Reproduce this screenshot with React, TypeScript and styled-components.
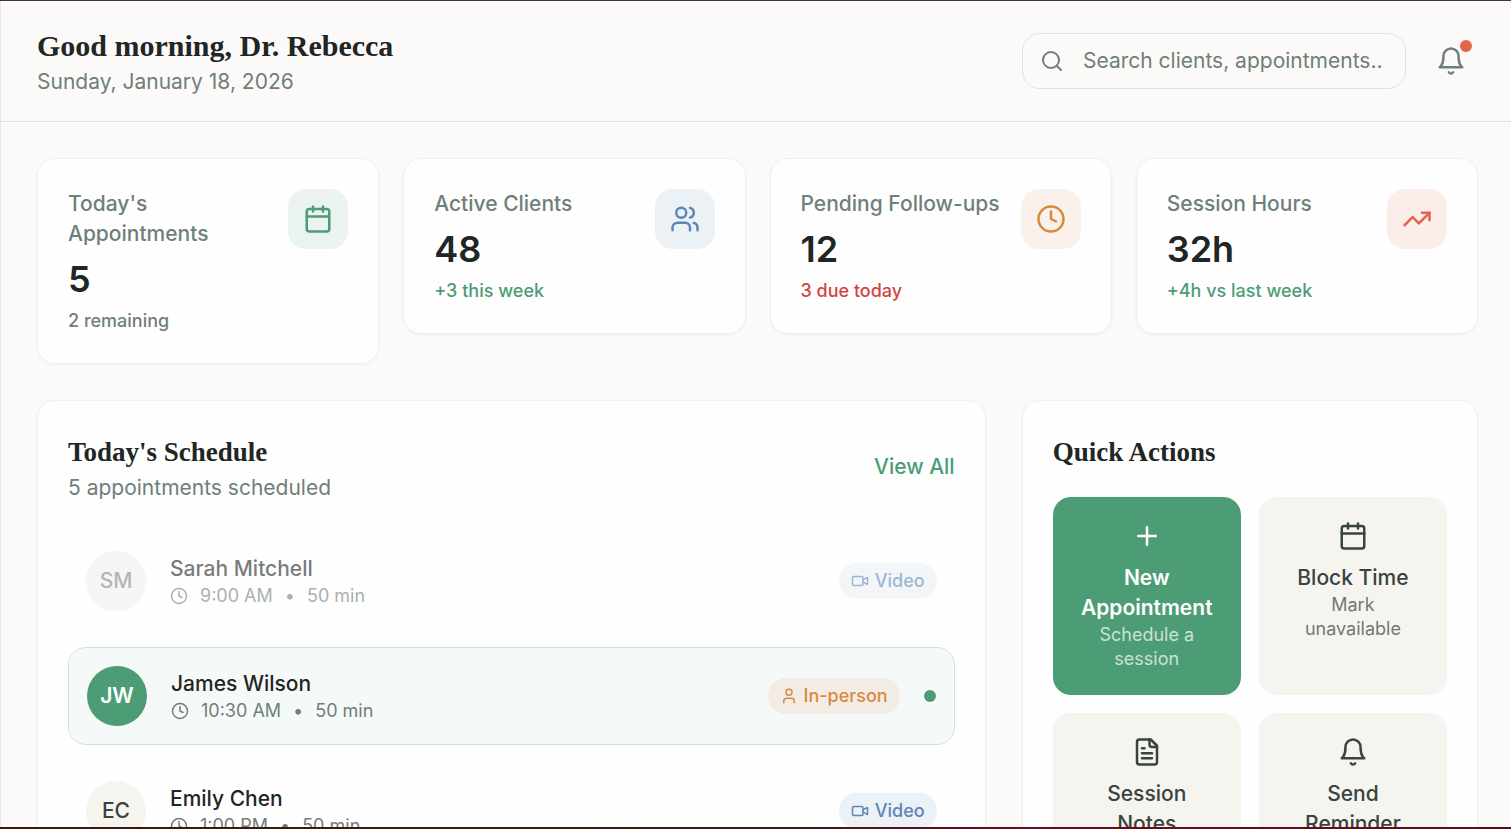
import React from "react";
import styled, { createGlobalStyle, css } from "styled-components";

const color = {
  page: "#fcfaf8",
  card: "#fefefe",
  ink: "#1f2624",
  inkSoft: "#39433f",
  muted: "#6e8079",
  border: "#e0e3df",
  cardBorder: "#f1f1ef",
  green: "#4c9c75",
  blue: "#5c86b5",
  orange: "#d88a40",
  coral: "#e2654a",
  red: "#cf4545",
  sand: "#f5f4ef",
};

const GlobalStyle = createGlobalStyle`
  *, *::before, *::after { box-sizing: border-box; }
  body {
    margin: 0;
    background: ${color.page};
    color: ${color.ink};
    font-family: Inter, "Liberation Sans", sans-serif;
    font-size: 21px;
    line-height: 30px;
  }
  h1, h2, h3, p, ul { margin: 0; padding: 0; }
  ul { list-style: none; }
  button, input { font: inherit; color: inherit; }
`;

/* Icons */

const Svg = styled.svg<{ $size: number }>`
  display: block;
  flex: none;
  width: ${(p) => p.$size}px;
  height: ${(p) => p.$size}px;
  fill: none;
  stroke: currentColor;
  stroke-width: 2;
  stroke-linecap: round;
  stroke-linejoin: round;
`;

const shapes = {
  search: (
    <>
      <circle cx="11" cy="11" r="8" />
      <path d="m21 21-4.3-4.3" />
    </>
  ),
  bell: (
    <>
      <path d="M6 8a6 6 0 0 1 12 0c0 7 3 9 3 9H3s3-2 3-9" />
      <path d="M10.3 21a1.94 1.94 0 0 0 3.4 0" />
    </>
  ),
  calendar: (
    <>
      <path d="M8 2v4M16 2v4M3 10h18" />
      <rect width="18" height="18" x="3" y="4" rx="2" />
    </>
  ),
  users: (
    <>
      <path d="M16 21v-2a4 4 0 0 0-4-4H6a4 4 0 0 0-4 4v2" />
      <circle cx="9" cy="7" r="4" />
      <path d="M22 21v-2a4 4 0 0 0-3-3.87M16 3.13a4 4 0 0 1 0 7.75" />
    </>
  ),
  clock: (
    <>
      <circle cx="12" cy="12" r="10" />
      <path d="M12 6v6l4 2" />
    </>
  ),
  trend: (
    <>
      <path d="m22 7-8.5 8.5-5-5L2 17" />
      <path d="M16 7h6v6" />
    </>
  ),
  video: (
    <>
      <path d="m16 13 5.223 3.482a.5.5 0 0 0 .777-.416V7.87a.5.5 0 0 0-.752-.432L16 10.5" />
      <rect x="2" y="6" width="14" height="12" rx="2" />
    </>
  ),
  user: (
    <>
      <path d="M19 21v-2a4 4 0 0 0-4-4H9a4 4 0 0 0-4 4v2" />
      <circle cx="12" cy="7" r="4" />
    </>
  ),
  plus: <path d="M5 12h14M12 5v14" />,
  file: (
    <>
      <path d="M15 2H6a2 2 0 0 0-2 2v16a2 2 0 0 0 2 2h12a2 2 0 0 0 2-2V7Z" />
      <path d="M14 2v4a2 2 0 0 0 2 2h4M10 9H8M16 13H8M16 17H8" />
    </>
  ),
};

type IconName = keyof typeof shapes;

const Icon = ({ name, size = 30 }: { name: IconName; size?: number }) => (
  <Svg $size={size} viewBox="0 0 24 24" aria-hidden="true">
    {shapes[name]}
  </Svg>
);

/* Page frame */

const Frame = styled.div`
  display: flex;
  flex-direction: column;
  height: 100vh;
  overflow: hidden;
  border-top: 1px solid #4a3338;
`;

const Scroller = styled.div`
  flex: 1;
  min-height: 0;
  overflow: hidden;
  border-left: 1px solid #e9e9e6;
`;

const BottomEdge = styled.div`
  flex: none;
  height: 2px;
  background: linear-gradient(90deg, #451208, #3c1a12 50%, #6b0a1a 68%, #5c0c14);
`;

const Header = styled.header`
  display: flex;
  align-items: center;
  justify-content: space-between;
  padding: 24px 33px 24px 36px;
  border-bottom: 1px solid ${color.border};
`;

const serifHeading = css`
  font-family: "Liberation Serif", "Times New Roman", serif;
  font-weight: 700;
  line-height: 42px;
  color: ${color.ink};
`;

const Greeting = styled.h1`
  ${serifHeading}
  font-size: 30px;
`;

const Heading = styled.h2`
  ${serifHeading}
  font-size: 27px;
`;

const Muted = styled.p`
  color: ${color.muted};
`;

const HeaderTools = styled.div`
  display: flex;
  align-items: center;
  gap: 18px;
`;

const SearchBox = styled.label`
  display: flex;
  align-items: center;
  gap: 19px;
  width: 384px;
  padding: 12px 23px 12px 17px;
  border: 1px solid ${color.border};
  border-radius: 18px;
  color: ${color.muted};
`;

const SearchInput = styled.input`
  flex: 1;
  min-width: 0;
  height: 30px;
  padding: 0;
  border: 0;
  outline: 0;
  background: transparent;
  &::placeholder {
    color: ${color.muted};
    opacity: 1;
  }
`;

const BellButton = styled.button`
  position: relative;
  padding: 12px;
  border: 0;
  border-radius: 18px;
  background: transparent;
  color: ${color.muted};
`;

const Unread = styled.span`
  position: absolute;
  top: 6px;
  right: 6px;
  width: 12px;
  height: 12px;
  border-radius: 50%;
  background: ${color.coral};
`;

const Main = styled.main`
  display: grid;
  gap: 36px;
  padding: 36px 33px 36px 36px;
`;

const Card = styled.section`
  padding: 30px;
  border: 1px solid ${color.cardBorder};
  border-radius: 18px;
  background: ${color.card};
  box-shadow: 0 1px 3px rgba(30, 40, 35, 0.05);
`;

/* Statistics */

const Stats = styled.div`
  display: grid;
  grid-template-columns: repeat(4, minmax(0, 1fr));
  align-items: start;
  gap: 24px;
`;

const StatCard = styled(Card)`
  display: flex;
  align-items: flex-start;
  justify-content: space-between;
`;

const StatLabel = styled.h3`
  font-size: 21px;
  font-weight: 500;
  color: ${color.muted};
`;

const StatValue = styled.p`
  margin: 6px 0;
  font-size: 36px;
  font-weight: 600;
  line-height: 48px;
`;

const StatNote = styled.p<{ $color: string }>`
  font-size: 18px;
  font-weight: 500;
  line-height: 24px;
  color: ${(p) => p.$color};
`;

const StatIcon = styled.span<{ $color: string; $background: string }>`
  flex: none;
  padding: 15px;
  border-radius: 18px;
  color: ${(p) => p.$color};
  background: ${(p) => p.$background};
`;

/* Schedule */

const Columns = styled.div`
  display: grid;
  grid-template-columns: repeat(3, minmax(0, 1fr));
  gap: 36px;
`;

const ScheduleCard = styled(Card)`
  grid-column: span 2;
`;

const CardTop = styled.div`
  display: flex;
  align-items: center;
  justify-content: space-between;
  margin-bottom: 30px;
`;

const ViewAll = styled.a`
  font-weight: 500;
  color: ${color.green};
  text-decoration: none;
`;

const List = styled.ul`
  display: grid;
  gap: 18px;
`;

type RowState = "past" | "current" | "next";

const Row = styled.li<{ $state: RowState }>`
  display: flex;
  align-items: center;
  gap: 24px;
  padding: 18px;
  border-radius: 18px;
  ${(p) => p.$state === "past" && css`opacity: 0.6;`}
  ${(p) =>
    p.$state === "current" &&
    css`
      border: 1px solid #cfe5dc;
      background: #f5f9f8;
    `}
`;

const avatarLook: Record<RowState, { text: string; fill: string }> = {
  past: { text: "#7c8984", fill: "#f3f0ef" },
  current: { text: "#fff", fill: color.green },
  next: { text: color.inkSoft, fill: color.sand },
};

const Avatar = styled.span<{ $state: RowState }>`
  flex: none;
  display: grid;
  place-items: center;
  width: 60px;
  height: 60px;
  border-radius: 50%;
  font-weight: ${(p) => (p.$state === "current" ? 600 : 500)};
  color: ${(p) => avatarLook[p.$state].text};
  background: ${(p) => avatarLook[p.$state].fill};
`;

const Person = styled.div`
  flex: 1;
`;

const Name = styled.h3`
  font-size: 21px;
  font-weight: 500;
`;

const Meta = styled.p`
  display: flex;
  align-items: center;
  gap: 12px;
  font-size: 18px;
  line-height: 24px;
  color: ${color.muted};
`;

const Badge = styled.span<{ $video: boolean }>`
  display: flex;
  align-items: center;
  gap: 6px;
  padding: 6px 12px;
  border-radius: 18px;
  font-size: 18px;
  font-weight: 500;
  line-height: 24px;
  color: ${(p) => (p.$video ? color.blue : color.orange)};
  background: ${(p) => (p.$video ? "#ecf1f6" : "#f3ece5")};
`;

const NowDot = styled.span`
  width: 12px;
  height: 12px;
  border-radius: 50%;
  background: ${color.green};
`;

/* Quick actions */

const Actions = styled.div`
  display: grid;
  grid-template-columns: repeat(2, minmax(0, 1fr));
  gap: 18px;
  margin-top: 24px;
`;

const Action = styled.button<{ $primary: boolean }>`
  display: flex;
  flex-direction: column;
  align-items: center;
  padding: 24px;
  border: 0;
  border-radius: 18px;
  text-align: center;
  color: ${(p) => (p.$primary ? "#fff" : color.inkSoft)};
  background: ${(p) => (p.$primary ? color.green : color.sand)};
`;

const ActionLabel = styled.span<{ $strong: boolean }>`
  margin-top: 12px;
  font-weight: ${(p) => (p.$strong ? 600 : 500)};
`;

const ActionNote = styled.span`
  font-size: 18px;
  line-height: 24px;
  opacity: 0.7;
`;

const stats: {
  label: string;
  value: string;
  note: string;
  noteColor: string;
  icon: IconName;
  color: string;
  background: string;
}[] = [
  { label: "Today's Appointments", value: "5", note: "2 remaining", noteColor: color.muted, icon: "calendar", color: color.green, background: "#eaf3f0" },
  { label: "Active Clients", value: "48", note: "+3 this week", noteColor: color.green, icon: "users", color: color.blue, background: "#ecf1f6" },
  { label: "Pending Follow-ups", value: "12", note: "3 due today", noteColor: color.red, icon: "clock", color: color.orange, background: "#faf1eb" },
  { label: "Session Hours", value: "32h", note: "+4h vs last week", noteColor: color.green, icon: "trend", color: color.coral, background: "#fbeeea" },
];

const appointments: {
  initials: string;
  name: string;
  time: string;
  video: boolean;
  state: RowState;
}[] = [
  { initials: "SM", name: "Sarah Mitchell", time: "9:00 AM", video: true, state: "past" },
  { initials: "JW", name: "James Wilson", time: "10:30 AM", video: false, state: "current" },
  { initials: "EC", name: "Emily Chen", time: "1:00 PM", video: true, state: "next" },
];

const actions: { label: string; note?: string; icon: IconName; primary?: boolean }[] = [
  { label: "New Appointment", note: "Schedule a session", icon: "plus", primary: true },
  { label: "Block Time", note: "Mark unavailable", icon: "calendar" },
  { label: "Session Notes", icon: "file" },
  { label: "Send Reminder", icon: "bell" },
];

export default function App() {
  return (
    <Frame>
      <GlobalStyle />
      <Scroller>
        <Header>
          <div>
            <Greeting>Good morning, Dr. Rebecca</Greeting>
            <Muted>Sunday, January 18, 2026</Muted>
          </div>
          <HeaderTools>
            <SearchBox>
              <Icon name="search" size={24} />
              <SearchInput type="text" aria-label="Search" placeholder="Search clients, appointments..." />
            </SearchBox>
            <BellButton type="button" aria-label="Notifications">
              <Icon name="bell" />
              <Unread />
            </BellButton>
          </HeaderTools>
        </Header>
        <Main>
          <Stats>
            {stats.map((s) => (
              <StatCard key={s.label}>
                <div>
                  <StatLabel>{s.label}</StatLabel>
                  <StatValue>{s.value}</StatValue>
                  <StatNote $color={s.noteColor}>{s.note}</StatNote>
                </div>
                <StatIcon $color={s.color} $background={s.background}>
                  <Icon name={s.icon} />
                </StatIcon>
              </StatCard>
            ))}
          </Stats>
          <Columns>
            <ScheduleCard>
              <CardTop>
                <div>
                  <Heading>Today's Schedule</Heading>
                  <Muted>5 appointments scheduled</Muted>
                </div>
                <ViewAll href="#schedule">View All</ViewAll>
              </CardTop>
              <List>
                {appointments.map((a) => (
                  <Row key={a.name} $state={a.state}>
                    <Avatar $state={a.state}>{a.initials}</Avatar>
                    <Person>
                      <Name>{a.name}</Name>
                      <Meta>
                        <Icon name="clock" size={18} />
                        <span>{a.time}</span>
                        <span>•</span>
                        <span>50 min</span>
                      </Meta>
                    </Person>
                    <Badge $video={a.video}>
                      <Icon name={a.video ? "video" : "user"} size={18} />
                      {a.video ? "Video" : "In-person"}
                    </Badge>
                    {a.state === "current" && <NowDot />}
                  </Row>
                ))}
              </List>
            </ScheduleCard>
            <Card>
              <Heading>Quick Actions</Heading>
              <Actions>
                {actions.map((a) => (
                  <Action key={a.label} type="button" $primary={!!a.primary}>
                    <Icon name={a.icon} />
                    <ActionLabel $strong={!!a.primary}>{a.label}</ActionLabel>
                    {a.note && <ActionNote>{a.note}</ActionNote>}
                  </Action>
                ))}
              </Actions>
            </Card>
          </Columns>
        </Main>
      </Scroller>
      <BottomEdge />
    </Frame>
  );
}
